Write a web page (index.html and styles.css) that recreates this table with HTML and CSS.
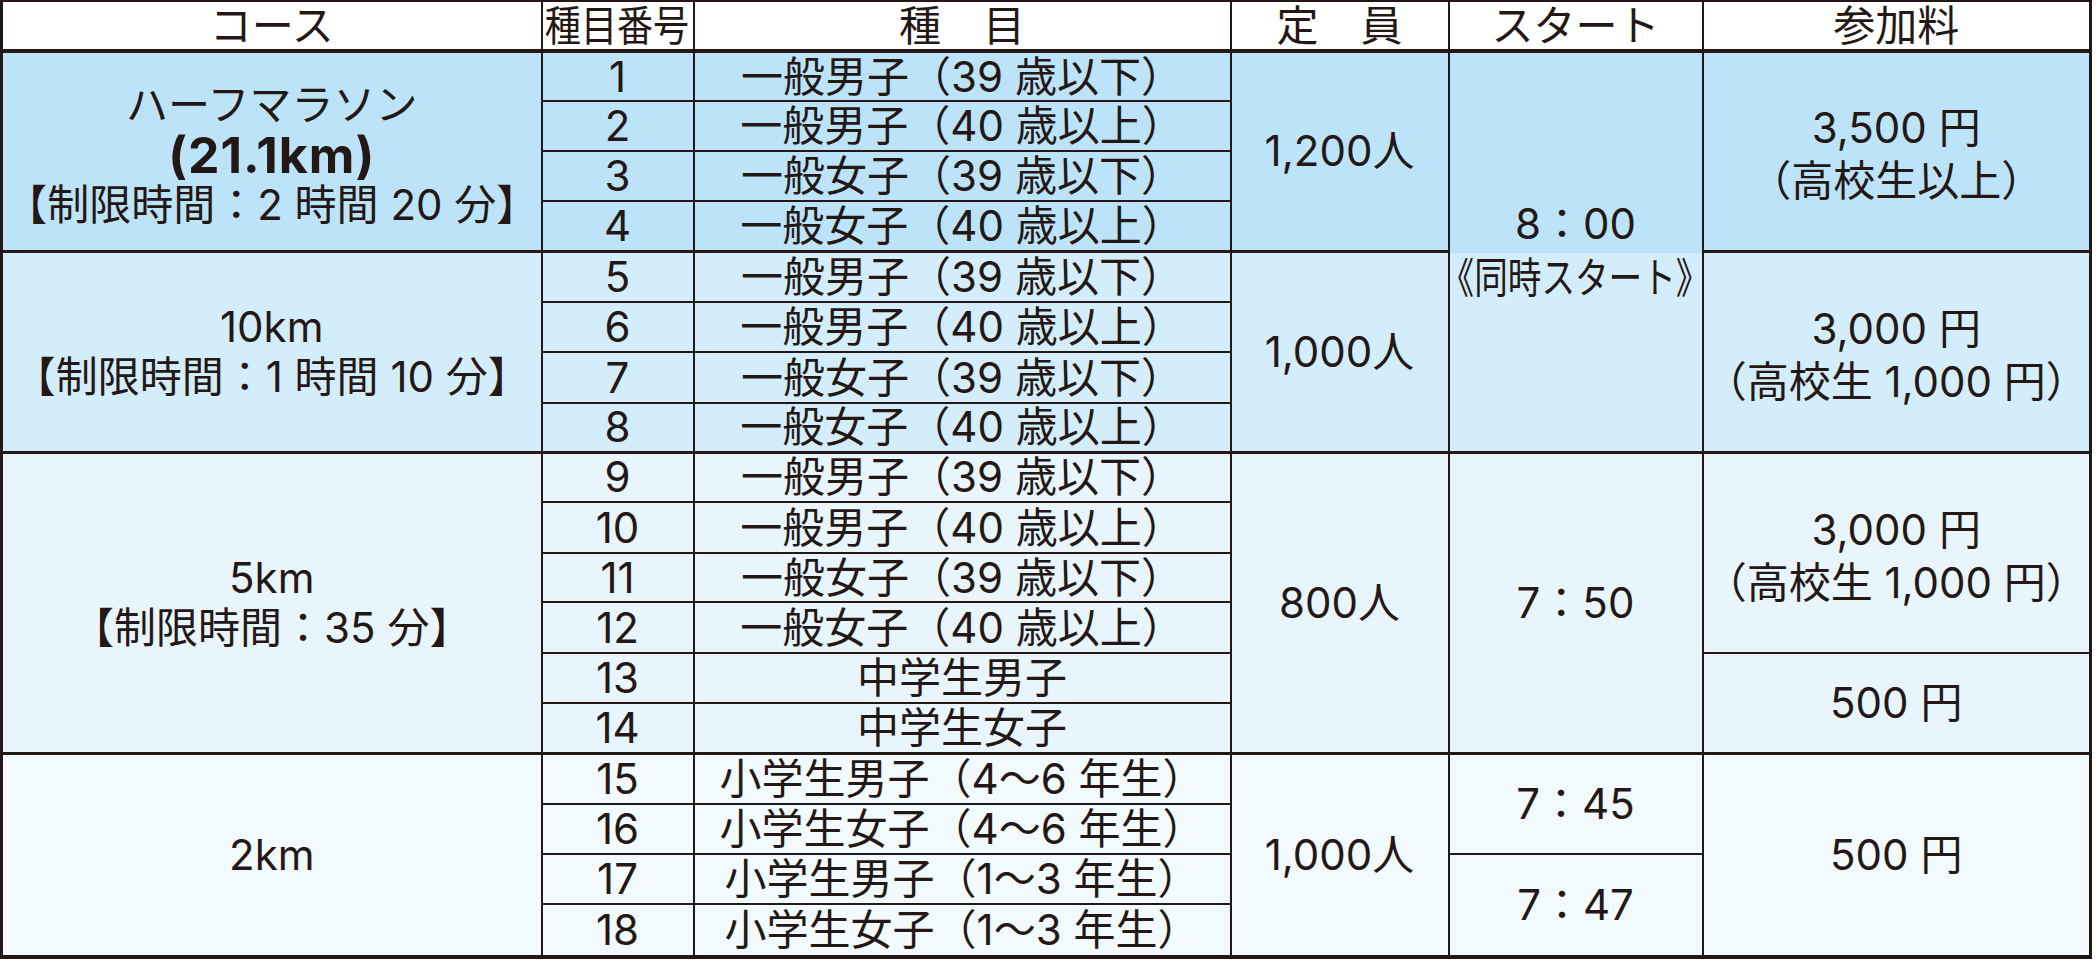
FILE: index.html
```html
<!DOCTYPE html>
<html lang="ja">
<head>
<meta charset="utf-8">
<title>種目一覧</title>
<link rel="stylesheet" href="styles.css">
</head>
<body>
<table class="race">
  <colgroup>
    <col class="c-course"><col class="c-no"><col class="c-event"><col class="c-cap"><col class="c-start"><col class="c-fee">
  </colgroup>
  <thead>
    <tr class="head">
      <th>コース</th>
      <th><span class="squeeze">種目番号</span></th>
      <th>種　目</th>
      <th>定　員</th>
      <th>スタート</th>
      <th>参加料</th>
    </tr>
  </thead>
  <tbody>
    <tr class="g1 r1 gs">
      <td rowspan="4" class="course course-half"><div>ハーフマラソン</div><div class="bold">(21.1km)</div><div>【制限時間：2 時間 20 分】</div></td>
      <td>1</td><td>一般男子（39 歳以下）</td>
      <td rowspan="4">1,200人</td>
      <td rowspan="8" class="start-split"><div>8：00</div><div><span class="squeeze2">《同時スタート》</span></div></td>
      <td rowspan="4" class="fee"><div>3,500 円</div><div>（高校生以上）</div></td>
    </tr>
    <tr class="g1 r2"><td>2</td><td>一般男子（40 歳以上）</td></tr>
    <tr class="g1 r3"><td>3</td><td>一般女子（39 歳以下）</td></tr>
    <tr class="g1 r4"><td>4</td><td>一般女子（40 歳以上）</td></tr>

    <tr class="g2 r5 gs">
      <td rowspan="4" class="course"><div>10km</div><div>【制限時間：1 時間 10 分】</div></td>
      <td>5</td><td>一般男子（39 歳以下）</td>
      <td rowspan="4">1,000人</td>
      <td rowspan="4" class="fee"><div>3,000 円</div><div>（高校生 1,000 円）</div></td>
    </tr>
    <tr class="g2 r6"><td>6</td><td>一般男子（40 歳以上）</td></tr>
    <tr class="g2 r7"><td>7</td><td>一般女子（39 歳以下）</td></tr>
    <tr class="g2 r8"><td>8</td><td>一般女子（40 歳以上）</td></tr>

    <tr class="g3 r9 gs">
      <td rowspan="6" class="course"><div>5km</div><div>【制限時間：35 分】</div></td>
      <td>9</td><td>一般男子（39 歳以下）</td>
      <td rowspan="6">800人</td>
      <td rowspan="6">7：50</td>
      <td rowspan="4" class="fee"><div>3,000 円</div><div>（高校生 1,000 円）</div></td>
    </tr>
    <tr class="g3 r10"><td>10</td><td>一般男子（40 歳以上）</td></tr>
    <tr class="g3 r11"><td>11</td><td>一般女子（39 歳以下）</td></tr>
    <tr class="g3 r12"><td>12</td><td>一般女子（40 歳以上）</td></tr>
    <tr class="g3 r13"><td>13</td><td>中学生男子</td><td rowspan="2">500 円</td></tr>
    <tr class="g3 r14"><td>14</td><td>中学生女子</td></tr>

    <tr class="g4 r15 gs">
      <td rowspan="4" class="course">2km</td>
      <td>15</td><td>小学生男子（4〜6 年生）</td>
      <td rowspan="4">1,000人</td>
      <td rowspan="2">7：45</td>
      <td rowspan="4">500 円</td>
    </tr>
    <tr class="g4 r16"><td>16</td><td>小学生女子（4〜6 年生）</td></tr>
    <tr class="g4 r17"><td>17</td><td>小学生男子（1〜3 年生）</td><td rowspan="2">7：47</td></tr>
    <tr class="g4 r18"><td>18</td><td>小学生女子（1〜3 年生）</td></tr>
  </tbody>
</table>
</body>
</html>
```

FILE: styles.css
```css
html, body {
  margin: 0;
  padding: 0;
  background: #ffffff;
}

body {
  font-family: Inter, "Noto Sans CJK JP", sans-serif;
  color: #231815;
}

.race {
  border-collapse: collapse;
  table-layout: fixed;
  width: 2092px;
  border-left: 3px solid #231815;
  border-right: 3px solid #231815;
  border-top: 2px solid #231815;
  border-bottom: 4px solid #231815;
}

.c-course { width: 540px; }
.c-no { width: 152px; }
.c-event { width: 537px; }
.c-cap { width: 218px; }
.c-start { width: 254px; }
.c-fee { width: 388px; }

th, td {
  border: 2px solid #231815;
  padding: 0;
  text-align: center;
  vertical-align: middle;
  white-space: nowrap;
  font-weight: 400;
}

th {
  font-size: 42px;
  line-height: 44px;
  background: #ffffff;
  border-bottom-width: 4px;
}

td {
  font-size: 42px;
  line-height: 40px;
}

.head { height: 50px; }

tr.gs td { border-top-width: 3px; }

.g1 td { background: #bce3f8; }
.g2 td { background: #d4edfa; }
.g3 td { background: #e8f5fd; }
.g4 td { background: #f3fafe; }

.r1, .r2, .r3, .r4, .r6, .r9, .r13, .r14, .r16, .r17 { height: 50px; }
.r5, .r7, .r10, .r12, .r15 { height: 51px; }
.r8, .r11 { height: 49px; }
.r18 { height: 53px; }

.course { line-height: 50px; }
.course-half { padding-top: 8px; }
.course .bold {
  font-weight: 700;
  font-size: 50px;
  letter-spacing: 1px;
  line-height: 50px;
}

.fee { line-height: 53px; padding-top: 6px; }

.g1 td.start-split {
  background: linear-gradient(to bottom, #bce3f8 0, #bce3f8 200px, #d4edfa 200px);
  line-height: 54px;
  padding-bottom: 2px;
}

.squeeze {
  display: inline-block;
  margin: 0 -12px;
  transform: scaleX(0.86);
}

.squeeze2 {
  display: inline-block;
  margin: 0 -50px;
  transform: scaleX(0.8);
}
```
